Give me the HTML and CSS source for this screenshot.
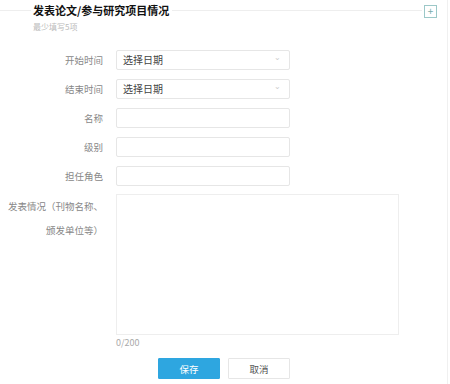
FILE: index.html
```html
<!DOCTYPE html>
<html lang="zh">
<head>
    <meta charset="UTF-8">
    <title>发表论文/参与研究项目情况</title>
    <link rel="stylesheet" href="styles.css">
</head>
<body>
    <div class="panel">
        <div class="head">
            <span class="line-left"></span>
            <h2>发表论文/参与研究项目情况</h2>
            <span class="line-right"></span>
            <span class="btn-plus">+</span>
        </div>
        <div class="sub">最少填写5项</div>

        <div class="form">
            <div class="row">
                <label>开始时间</label>
                <div class="field select">选择日期<span class="arrow">⌄</span></div>
            </div>
            <div class="row">
                <label>结束时间</label>
                <div class="field select">选择日期<span class="arrow">⌄</span></div>
            </div>
            <div class="row">
                <label>名称</label>
                <div class="field"></div>
            </div>
            <div class="row">
                <label>级别</label>
                <div class="field"></div>
            </div>
            <div class="row">
                <label>担任角色</label>
                <div class="field"></div>
            </div>
            <div class="row row-area">
                <label class="multi">发表情况（刊物名称、<br>颁发单位等）</label>
                <div>
                    <div class="area"></div>
                    <div class="count">0/200</div>
                </div>
            </div>
            <div class="actions">
                <button class="btn-save">保存</button>
                <button class="btn-cancel">取消</button>
            </div>
        </div>
    </div>
</body>
</html>
```

FILE: styles.css
```css
body {
    margin: 0;
    font-family: "Noto Sans CJK SC", "Noto Sans", sans-serif;
    background: #fff;
    color: #666;
}
.panel {
    width: 447px;
    height: 384px;
    border-right: 1px solid #f0f0f0;
}
.head {
    display: flex;
    align-items: center;
    height: 20px;
}
.line-left {
    width: 31px;
    border-top: 1px solid #eee;
}
.line-right {
    flex: 1;
    border-top: 1px solid #eee;
}
h2 {
    margin: 0 3px 0 2px;
    font-size: 11px;
    font-weight: bold;
    color: #111;
    line-height: 20px;
}
.btn-plus {
    width: 11px;
    height: 11px;
    border: 1px solid #9cc8c8;
    color: #7aa;
    font-size: 10px;
    line-height: 10px;
    text-align: center;
    margin: 2px 10px 0 2px;
}
.sub {
    margin-left: 33px;
    margin-top: 1px;
    font-size: 8px;
    color: #bbb;
    line-height: 12px;
}
.form {
    padding-top: 17px;
}
.row {
    display: flex;
    align-items: center;
    margin-bottom: 9px;
}
.row label {
    width: 103px;
    margin-right: 13px;
    text-align: right;
    font-size: 9.5px;
    color: #888;
}
.field {
    width: 174px;
    height: 20px;
    border: 1px solid #e6e6e6;
    border-radius: 2px;
    box-sizing: border-box;
    font-size: 10px;
    color: #444;
    line-height: 18px;
    padding-left: 6px;
    position: relative;
}
.arrow {
    position: absolute;
    right: 8px;
    top: -3px;
    font-size: 8px;
    color: #ccc;
}
.row-area {
    align-items: flex-start;
    margin-top: -1px;
}
.multi {
    line-height: 24px;
    padding-top: 0;
}
.area {
    width: 283px;
    height: 141px;
    border: 1px solid #eee;
    box-sizing: border-box;
}
.count {
    font-size: 9px;
    color: #aaa;
    margin-top: 1px;
}
.actions {
    display: flex;
    gap: 8px;
    padding-left: 158px;
    margin-top: 8px;
}
button {
    width: 62px;
    height: 21px;
    font-size: 9.5px;
    font-family: "Noto Sans CJK SC", sans-serif;
    border-radius: 1px;
    cursor: pointer;
}
.btn-save {
    background: #2ea6e0;
    border: 1px solid #2ea6e0;
    color: #fff;
}
.btn-cancel {
    background: #fff;
    border: 1px solid #e6e6e6;
    color: #555;
}
```
